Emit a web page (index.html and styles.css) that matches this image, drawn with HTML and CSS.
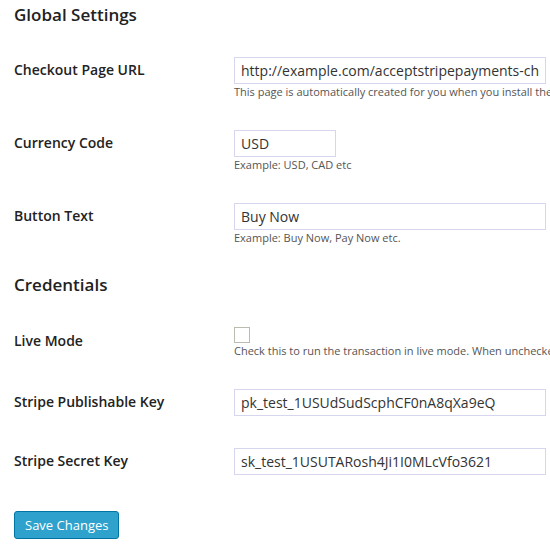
FILE: index.html
```html
<!DOCTYPE html>
<html lang="en">
<head>
<meta charset="utf-8">
<title>Settings</title>
<link rel="stylesheet" href="styles.css">
</head>
<body>
<div class="wrap">
  <h2 class="section-title section-title--first">Global Settings</h2>
  <div class="form-table">
    <div class="row">
      <div class="label">Checkout Page URL</div>
      <div class="field">
        <input class="text text--regular" type="text" value="http://example.com/acceptstripepayments-checkout">
        <p class="desc">This page is automatically created for you when you install the plugin.</p>
      </div>
    </div>
    <div class="row">
      <div class="label">Currency Code</div>
      <div class="field">
        <input class="text text--small" type="text" value="USD">
        <p class="desc">Example: USD, CAD etc</p>
      </div>
    </div>
    <div class="row">
      <div class="label">Button Text</div>
      <div class="field">
        <input class="text text--regular" type="text" value="Buy Now">
        <p class="desc">Example: Buy Now, Pay Now etc.</p>
      </div>
    </div>
  </div>

  <h2 class="section-title">Credentials</h2>
  <div class="form-table">
    <div class="row">
      <div class="label label--check">Live Mode</div>
      <div class="field">
        <span class="checkbox"></span>
        <p class="desc">Check this to run the transaction in live mode. When unchecked it will run in test mode.</p>
      </div>
    </div>
    <div class="row">
      <div class="label">Stripe Publishable Key</div>
      <div class="field">
        <input class="text text--regular" type="text" value="pk_test_1USUdSudScphCF0nA8qXa9eQ">
      </div>
    </div>
    <div class="row">
      <div class="label">Stripe Secret Key</div>
      <div class="field">
        <input class="text text--regular" type="text" value="sk_test_1USUTARosh4Ji1I0MLcVfo3621">
      </div>
    </div>
  </div>

  <div class="submit">
    <button class="button-primary" type="button">Save Changes</button>
  </div>
</div>
</body>
</html>
```

FILE: styles.css
```css
html {
  overflow: hidden;
  background: #ffffff;
}

body {
  margin: 0;
  font-family: "Open Sans", "Liberation Sans", sans-serif;
  color: #222222;
}

.wrap {
  padding: 0 14px;
}

.section-title {
  margin: 12px 0 15px;
  font-size: 17px;
  line-height: 24px;
  font-weight: 600;
  color: #222222;
}

.section-title--first {
  margin-top: 3px;
}

.row {
  display: flex;
  align-items: flex-start;
}

.label {
  width: 220px;
  flex: none;
  padding-top: 18px;
  font-size: 14px;
  line-height: 20px;
  font-weight: 600;
  color: #222222;
  white-space: nowrap;
}

.label--check {
  padding-top: 19px;
}

.field {
  padding: 14px 0 16px;
  min-width: 0;
}

.text {
  display: block;
  box-sizing: border-box;
  height: 27px;
  margin: 1px 0;
  padding: 0 6px;
  border: 1px solid #d6d6ef;
  background: #ffffff;
  font-family: "Open Sans", "Liberation Sans", sans-serif;
  font-size: 14px;
  color: #333333;
  outline: none;
}

.text--small {
  width: 102px;
}

.text--regular {
  width: 312px;
}

.checkbox {
  display: block;
  box-sizing: border-box;
  width: 16px;
  height: 16px;
  margin: 1px 0;
  border: 1px solid #b9bcb0;
  background: #ffffff;
}

.desc {
  margin: 0;
  font-size: 11px;
  line-height: 14px;
  color: #555555;
  white-space: nowrap;
}

.submit {
  padding-top: 19px;
}

.button-primary {
  height: 28px;
  padding: 0 10px;
  border: 1px solid #0074a2;
  border-radius: 3px;
  background: #2ea2cc;
  color: #ffffff;
  font-family: "Open Sans", "Liberation Sans", sans-serif;
  font-size: 13px;
  line-height: 26px;
  cursor: pointer;
}
```
